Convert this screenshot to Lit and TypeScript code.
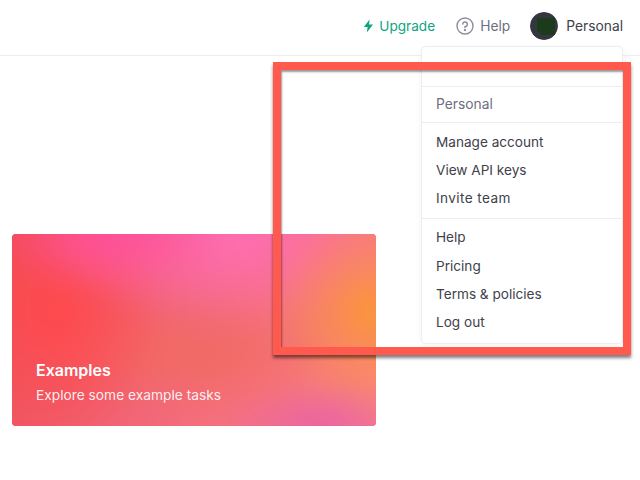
import { LitElement, html, css } from 'lit';
import { customElement } from 'lit/decorators.js';

@customElement('app-root')
export class AppRoot extends LitElement {
  static styles = css`
    :host {
      display: block;
      position: relative;
      width: 640px;
      height: 480px;
      overflow: hidden;
      background: #fff;
      font-family: Inter, 'Noto Sans', sans-serif;
      font-size: 14px;
      color: #40414a;
    }

    .header {
      display: flex;
      justify-content: flex-end;
      align-items: center;
      height: 52px;
      padding: 0 17px 3px 0;
      box-sizing: content-box;
      border-bottom: 1px solid #ececf1;
    }

    .nav {
      display: flex;
      align-items: center;
    }

    .upgrade {
      color: #10a37f;
      display: flex;
      align-items: center;
      gap: 5px;
      margin-right: 21px;
      font-size: 13.6px;
    }

    .help {
      color: #6e6e80;
      display: flex;
      align-items: center;
      gap: 6px;
      margin-right: 20px;
      font-size: 13.8px;
    }

    .avatar {
      width: 28px;
      height: 28px;
      border-radius: 50%;
      margin-right: 8px;
    }

    .me {
      font-size: 13.8px;
    }

    .content {
      padding: 178px 0 0 12px;
    }

    .card {
      position: relative;
      overflow: hidden;
      width: 364px;
      height: 192px;
      box-sizing: border-box;
      border-radius: 4px;
      padding: 125px 24px 0;
      color: #fff;
      background: #f0606a;
    }

    .glow {
      position: absolute;
      inset: -24px;
      filter: blur(12px);
      background:
        radial-gradient(circle at 93% 42%, #fb9a2f 0, rgba(251, 154, 47, 0.55) 7%, rgba(251, 154, 47, 0) 24%),
        radial-gradient(ellipse 26% 18% at 81% 90%, #e95fa8 0, rgba(233, 95, 168, 0) 100%),
        radial-gradient(ellipse 30% 24% at 30% 10%, #ff4f9c 0, rgba(255, 79, 156, 0) 100%),
        radial-gradient(ellipse 46% 36% at 58% 12%, #ff6fb5 0, rgba(255, 111, 181, 0) 100%),
        radial-gradient(ellipse 26% 56% at 17% 42%, #ff494c 0, rgba(255, 73, 76, 0) 100%),
        radial-gradient(ellipse 36% 26% at 50% 60%, #f26a62 0, rgba(242, 106, 98, 0) 100%),
        linear-gradient(115deg, #ec484f 0%, #f2687a 50%, #fa8a80 100%);
    }

    .card-title,
    .card-text {
      position: relative;
    }

    .card-title {
      font-size: 16px;
      font-weight: 600;
      line-height: 22px;
    }

    .card-text {
      font-size: 13.75px;
      line-height: 20px;
      margin-top: 4px;
      color: rgba(255, 255, 255, 0.9);
    }

    .menu {
      position: absolute;
      left: 422px;
      top: 47px;
      width: 200px;
      height: 296px;
      box-sizing: border-box;
      background: #fff;
      border-radius: 4px;
      box-shadow: 0 0 0 1px #ececf1, 0 2px 8px rgba(0, 0, 0, 0.06);
    }

    .blank {
      height: 39px;
      border-bottom: 1px solid #ececf1;
    }

    .group {
      padding: 0 14px;
      border-bottom: 1px solid #ececf1;
    }

    .group:last-child {
      border-bottom: none;
    }

    .group.title {
      height: 33px;
      padding-bottom: 2px;
      display: flex;
      align-items: center;
      color: #6e6e80;
      font-size: 13.8px;
    }

    .group.links {
      padding-top: 5px;
      padding-bottom: 6px;
      font-size: 13.6px;
    }

    .group.links.lower {
      padding-top: 4px;
    }

    .lower .item:first-child {
      margin-bottom: 1px;
    }

    .item {
      height: 28px;
      line-height: 28px;
      white-space: nowrap;
    }

    .item.wide {
      letter-spacing: 0.4px;
    }

    .redbox {
      position: absolute;
      left: 273px;
      top: 62px;
      width: 358px;
      height: 293px;
      box-sizing: border-box;
      border: 8px solid #ff5a4d;
      box-shadow: 0 3px 3px rgba(0, 0, 0, 0.5), inset 1px 2px 2px rgba(0, 0, 0, 0.4);
    }
  `;

  render() {
    return html`
      <div class="header">
        <div class="nav">
          <div class="upgrade">
            <svg width="11" height="14" viewBox="0 0 11 14">
              <path d="M6.6 0.5 L0.8 8 H4.6 L3.8 13.5 L10 5.6 H6 Z" fill="#10a37f"></path>
            </svg>
            Upgrade
          </div>
          <div class="help">
            <svg width="18" height="18" viewBox="0 0 18 18" fill="none" stroke="#8e8ea0" stroke-width="1.4">
              <circle cx="9" cy="9" r="8"></circle>
              <path d="M6.7 7.1 A2.3 2.3 0 1 1 9 9.6 V10.6" stroke-linecap="round"></path>
              <circle cx="9" cy="13" r="0.5" fill="#8e8ea0"></circle>
            </svg>
            Help
          </div>
          <svg class="avatar" viewBox="0 0 28 28">
            <circle cx="14" cy="14" r="14" fill="#353740"></circle>
            <path d="M7 6 H25 V23 H10 V20 H7 Z" fill="#1c3a1c"></path>
          </svg>
          <div class="me">Personal</div>
        </div>
      </div>
      <div class="content">
        <div class="card">
          <div class="glow"></div>
          <div class="card-title">Examples</div>
          <div class="card-text">Explore some example tasks</div>
        </div>
      </div>
      <div class="menu">
        <div class="blank"></div>
        <div class="group title">Personal</div>
        <div class="group links">
          <div class="item">Manage account</div>
          <div class="item">View API keys</div>
          <div class="item wide">Invite team</div>
        </div>
        <div class="group links lower">
          <div class="item">Help</div>
          <div class="item">Pricing</div>
          <div class="item">Terms &amp; policies</div>
          <div class="item">Log out</div>
        </div>
      </div>
      <div class="redbox"></div>
    `;
  }
}
